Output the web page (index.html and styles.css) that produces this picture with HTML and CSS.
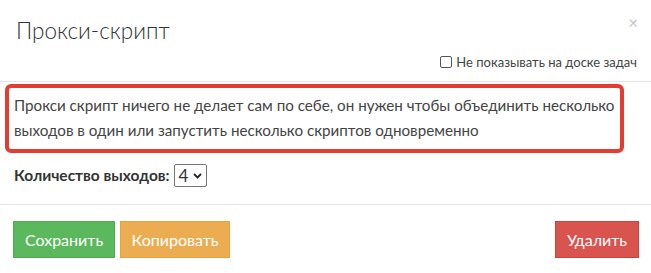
FILE: index.html
```html
<!DOCTYPE html>
<html lang="ru">
<head>
<meta charset="utf-8">
<title>Прокси-скрипт</title>
<link rel="stylesheet" href="styles.css">
</head>
<body>
<div class="modal">
  <div class="modal-header">
    <div class="title-row">
      <h4 class="modal-title">Прокси-скрипт</h4>
      <span class="close">&times;</span>
    </div>
    <label class="hide-option"><span class="checkbox"></span>Не показывать на доске задач</label>
  </div>
  <div class="modal-body">
    <div class="notice">Прокси скрипт ничего не делает сам по себе, он нужен чтобы объединить несколько выходов в один или запустить несколько скриптов одновременно</div>
    <div class="outputs">
      <span class="outputs-label">Количество выходов:</span>
      <span class="select">4<svg class="chev" width="9" height="6" viewBox="0 0 9 6"><path d="M1 1l3.5 3.5L8 1" fill="none" stroke="#222" stroke-width="1.8"/></svg></span>
    </div>
  </div>
  <div class="modal-footer">
    <div class="btn-group">
      <button class="btn btn-green">Сохранить</button>
      <button class="btn btn-orange">Копировать</button>
    </div>
    <button class="btn btn-red">Удалить</button>
  </div>
</div>
</body>
</html>
```
FILE: styles.css
```css
* { box-sizing: border-box; }
body {
  margin: 0;
  background: #fff;
  font-family: Lato, "Liberation Sans", sans-serif;
  color: #333;
}
.modal { width: 651px; }
.modal-header {
  border-bottom: 1px solid #e5e5e5;
  padding: 16px 14px 10px 16px;
  height: 82px;
}
.title-row {
  display: flex;
  justify-content: space-between;
  align-items: flex-start;
}
.modal-title {
  margin: 0;
  font-size: 22.5px;
  font-weight: 300;
  line-height: 30px;
  color: #333;
}
.close {
  color: #c4c4c4;
  font-size: 17px;
  line-height: 16px;
  margin-top: -1px;
  margin-right: -1px;
}
.hide-option {
  display: flex;
  justify-content: flex-end;
  align-items: center;
  font-size: 13px;
  color: #444;
  margin-top: 8px;
}
.checkbox {
  width: 12px;
  height: 12px;
  border: 1px solid #555;
  border-radius: 2px;
  margin-right: 4px;
}
.modal-body { padding: 2px 27px 0 5px; }
.notice {
  border: 4px solid #e53b31;
  border-radius: 6px;
  padding: 5px 5px 6px 5px;
  font-size: 15.2px;
  line-height: 25px;
  color: #444;
}
.outputs {
  display: flex;
  padding: 11px 0 0 9px;
  height: 51px;
  align-items: flex-start;
}
.outputs-label {
  font-weight: 700;
  font-size: 15.5px;
  line-height: 24px;
  margin-top: -1px;
  color: #333;
}
.select {
  display: flex;
  align-items: center;
  gap: 5px;
  margin-left: 4px;
  height: 23px;
  border: 1px solid #767676;
  border-radius: 2px;
  padding: 0 4px;
  font-size: 17px;
  color: #333;
}
.modal-footer {
  border-top: 1px solid #e5e5e5;
  display: flex;
  justify-content: space-between;
  padding: 16px 12px 0 13px;
}
.btn-group { display: flex; gap: 5px; }
.btn {
  font-family: Lato, "Liberation Sans", sans-serif;
  font-size: 16px;
  color: #fff;
  height: 37px;
  border: 1px solid;
  border-radius: 0;
  padding: 0 10px;
}
.btn-green { background: #5cb85c; border-color: #4cae4c; width: 102px; }
.btn-orange { background: #ecad52; border-color: #eea236; width: 110px; }
.btn-red { background: #d9534f; border-color: #d43f3a; width: 84px; }
```
